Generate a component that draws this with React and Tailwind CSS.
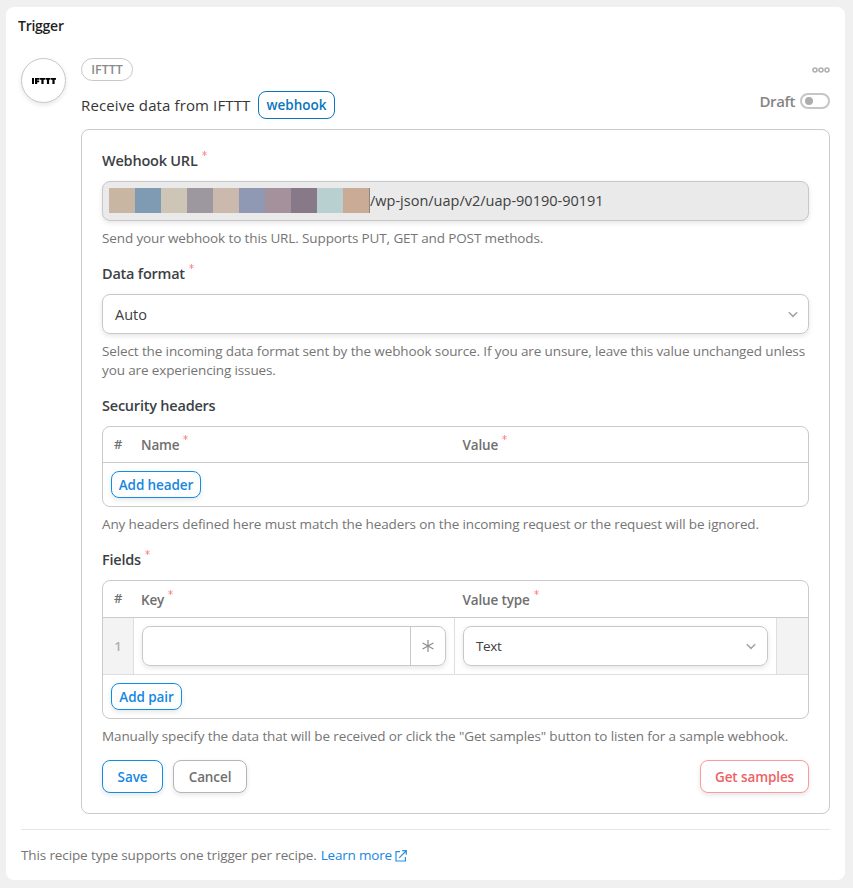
const swatches = [
  "bg-[#c9b6a2]",
  "bg-[#7f9bb3]",
  "bg-[#cdc5b5]",
  "bg-[#9d989f]",
  "bg-[#cbb9ad]",
  "bg-[#8f99b4]",
  "bg-[#a5919b]",
  "bg-[#877987]",
  "bg-[#b9d0d1]",
  "bg-[#caab96]",
];

function Star({ className = "" }) {
  return (
    <svg className={className} width="5" height="5" viewBox="0 0 5 5" fill="none" stroke="#ff8080" strokeWidth="0.8">
      <path d="M2.5 0v5M0.3 1.2l4.4 2.6M4.7 1.2L0.3 3.8" />
    </svg>
  );
}

function Label({ children, required, className = "" }) {
  return (
    <div className={`flex h-5 items-start text-[14.5px] leading-5 font-[550] tracking-[-0.22px] whitespace-nowrap text-[#3c3f45] ${className}`}>
      <span className="pt-px">{children}</span>
      {required && <Star className="mt-px ml-1" />}
    </div>
  );
}

function Help({ children, className = "" }) {
  return (
    <p className={`mt-2 text-[13.5px] leading-[19px] tracking-[-0.12px] whitespace-nowrap text-[#757575] ${className}`}>{children}</p>
  );
}

function Chevron({ className = "" }) {
  return (
    <svg className={className} width="10" height="7" viewBox="0 0 10 7" fill="none" stroke="#a3a3a3" strokeWidth="1.5">
      <path d="M0.8 1.2L5 5.4L9.2 1.2" />
    </svg>
  );
}

function Button({ children, className = "" }) {
  return (
    <button className={`flex items-center justify-center rounded-lg border bg-white pt-px text-[13.5px] font-[550] tracking-[-0.1px] whitespace-nowrap shadow-[0_2px_5px_rgba(0,0,0,0.1)] ${className}`}>
      {children}
    </button>
  );
}

function HeadCell({ children, className = "" }) {
  return (
    <div className={`flex items-start pt-px text-[13.5px] leading-5 font-[550] tracking-[-0.15px] whitespace-nowrap text-[#6f6f6f] ${className}`}>
      <span>{children}</span>
      <Star className="ml-1" />
    </div>
  );
}

export default function App() {
  return (
    <div className="h-[888px] w-[853px] bg-[#f0f0f0] pt-[7px] pl-[6px] font-['Open_Sans','Noto_Sans',sans-serif]">
      <div className="h-[873px] w-[839px] rounded-lg bg-white px-[15px] pt-[9px]">
        <h2 className="-ml-[3px] h-5 text-[14px] leading-5 font-[550] tracking-[-0.25px] text-[#1f1f1f]">Trigger</h2>

        <div className="mt-[22px] flex">
          <div className="flex h-[45px] w-[45px] items-center justify-center rounded-full border border-[#c8c8c8] bg-white shadow-[0_2px_5px_rgba(0,0,0,0.1)]">
            <svg className="mt-px" width="24" height="6.5" viewBox="0 0 24 7" fill="#000" preserveAspectRatio="none">
              <path d="M0 0h2v7H0zM3 0h4.6v1.8H5.2v1h2v1.8h-2V7H3zM8 0h5v1.9h-1.4V7H9.4V1.9H8zM13.5 0h5v1.9h-1.4V7h-2.2V1.9h-1.4zM19 0h5v1.9h-1.4V7h-2.2V1.9H19z" />
            </svg>
          </div>
          <div className="ml-[15px] flex-1">
            <div className="flex h-[23px] w-[52px] items-center justify-center rounded-full border border-[#c8c8c8] pt-[2px] text-[12.5px] font-[550] text-[#8a8a8a]">
              IFTTT
            </div>
            <div className="mt-[10px] flex h-7 items-center">
              <span className="w-[177px] text-[15px] tracking-[0.12px] whitespace-nowrap text-[#363636]">Receive data from IFTTT</span>
              <span className="flex h-7 w-[77px] items-center justify-center rounded-lg border border-[#0a76bd] pt-px text-[13.5px] font-[550] text-[#0a76bd]">
                webhook
              </span>
            </div>
          </div>
          <div className="flex flex-col items-end">
            <svg className="mt-[9px]" width="18" height="6" viewBox="0 0 18 6" fill="none" stroke="#b0b0b0" strokeWidth="1.6">
              <circle cx="3" cy="3" r="2" />
              <circle cx="9" cy="3" r="2" />
              <circle cx="15" cy="3" r="2" />
            </svg>
            <div className="mt-[18px] flex h-5 items-center gap-[5px]">
              <span className="text-[15px] leading-5 font-[550] tracking-[-0.4px] text-[#858585]">Draft</span>
              <span className="flex h-4 w-[30px] items-center rounded-full border-2 border-[#c6c6c6] pl-[3px]">
                <span className="h-2 w-2 rounded-full bg-[#adadad]" />
              </span>
            </div>
          </div>
        </div>

        <div className="mt-[10px] ml-[60px] h-[685px] w-[749px] rounded-lg border border-[#cacaca] px-5 pt-5">
          <Label required>Webhook URL</Label>
          <div className="mt-[11px] flex h-10 items-center rounded-lg border border-[#c8c8c8] bg-[#eaeaea] pl-[6px] shadow-[0_2px_5px_rgba(0,0,0,0.1)]">
            <div className="-mt-px flex h-[25px] border-r border-[#8d8580]">
              {swatches.map((color) => (
                <span key={color} className={`w-[26px] ${color}`} />
              ))}
            </div>
            <span className="pb-px text-[14.5px] whitespace-nowrap text-[#404040]">/wp-json/uap/v2/uap-90190-90191</span>
          </div>
          <Help>Send your webhook to this URL. Supports PUT, GET and POST methods.</Help>

          <Label required className="mt-[15px]">Data format</Label>
          <div className="mt-[11px] flex h-10 items-center justify-between rounded-lg border border-[#c8c8c8] pr-[10px] pl-3 text-[14.5px] text-[#404040] shadow-[0_2px_5px_rgba(0,0,0,0.1)]">
            <span className="pt-px">Auto</span>
            <Chevron />
          </div>
          <Help>
            Select the incoming data format sent by the webhook source. If you are unsure, leave this value unchanged unless
            <br />
            you are experiencing issues.
          </Help>

          <Label className="mt-[15px]">Security headers</Label>
          <div className="mt-[11px] h-[81px] rounded-lg border border-[#cacaca]">
            <div className="flex h-9 items-center border-b border-[#cacaca] pl-[11px]">
              <span className="w-[27px] text-[13px] font-semibold text-[#6f6f6f]">#</span>
              <HeadCell className="w-[321.5px]">Name</HeadCell>
              <HeadCell>Value</HeadCell>
            </div>
            <Button className="mt-2 ml-2 h-[27px] w-[90px] border-[#0d8fe5] text-[#1787e0]">Add header</Button>
          </div>
          <Help>Any headers defined here must match the headers on the incoming request or the request will be ignored.</Help>

          <Label required className="mt-[15px]">Fields</Label>
          <div className="mt-[11px] h-[139px] overflow-hidden rounded-lg border border-[#cacaca]">
            <div className="flex h-[37px] items-center border-b border-[#cacaca] pl-[11px]">
              <span className="w-[27px] text-[13px] font-semibold text-[#6f6f6f]">#</span>
              <HeadCell className="w-[321.5px]">Key</HeadCell>
              <HeadCell>Value type</HeadCell>
            </div>
            <div className="flex h-[57px] border-b border-[#dedede]">
              <div className="flex w-[31px] items-center justify-center border-r border-[#dedede] bg-[#f3f3f3] pt-px text-[13px] font-semibold text-[#b0b0b0]">
                1
              </div>
              <div className="w-[321px] border-r border-[#dedede] pt-2 pl-2">
                <div className="flex h-10 w-[304px] rounded-lg border border-[#c8c8c8] shadow-[0_2px_5px_rgba(0,0,0,0.1)]">
                  <div className="w-[267px]" />
                  <div className="flex flex-1 items-center justify-center border-l border-[#c8c8c8]">
                    <svg width="12" height="12" viewBox="0 0 12 12" fill="none" stroke="#8c8c8c" strokeWidth="1.2">
                      <path d="M6 0v12M0.6 3l10.8 6M11.4 3L0.6 9" />
                    </svg>
                  </div>
                </div>
              </div>
              <div className="w-[322px] border-r border-[#dedede] pt-2 pl-2">
                <div className="flex h-10 w-[305px] items-center justify-between rounded-lg border border-[#c8c8c8] pr-[11px] pl-3 text-[13.5px] text-[#404040] shadow-[0_2px_5px_rgba(0,0,0,0.1)]">
                  <span className="tracking-[-0.4px]">Text</span>
                  <Chevron />
                </div>
              </div>
              <div className="flex-1 bg-[#f3f3f3]" />
            </div>
            <Button className="mt-2 ml-2 h-[27px] w-[71px] border-[#0d8fe5] text-[#1787e0]">Add pair</Button>
          </div>
          <Help>Manually specify the data that will be received or click the "Get samples" button to listen for a sample webhook.</Help>

          <div className="mt-[14px] flex">
            <Button className="h-[33px] w-[61px] border-[#0d8fe5] text-[#1787e0]">Save</Button>
            <Button className="ml-[10px] h-[33px] w-[74px] border-[#b5b5b5] text-[#6f6f6f]">Cancel</Button>
            <Button className="ml-auto h-[33px] w-[109px] border-[#fb9c9c] text-[#ed6264]">Get samples</Button>
          </div>
        </div>

        <div className="mt-[15px] flex items-center border-t border-[#e6e6e6] pt-4 text-[13.5px] leading-5 tracking-[-0.12px] whitespace-nowrap text-[#757575]">
          <span className="-mt-px">This recipe type supports one trigger per recipe.</span>
          <a className="-mt-px ml-1 tracking-[-0.2px] text-[#1787e0]">Learn more</a>
          <svg className="ml-[3px]" width="12" height="12" viewBox="0 0 12 12" fill="none" stroke="#2b8fe2" strokeWidth="1.2">
            <path d="M5 1.6H1v9.4h9.4V7M7.2 0.7h4.1v4.1M11 1L4.2 7.8" />
          </svg>
        </div>
      </div>
    </div>
  );
}
